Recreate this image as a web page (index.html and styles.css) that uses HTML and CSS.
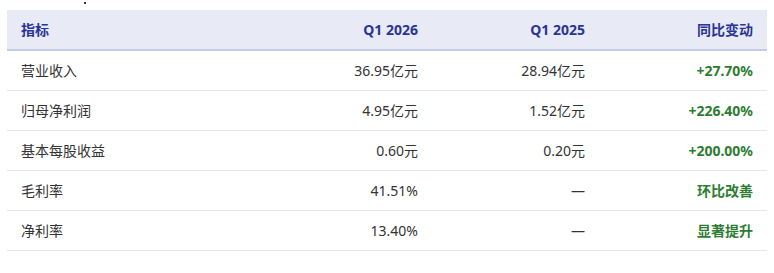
FILE: index.html
```html
<!DOCTYPE html>
<html lang="zh-CN">
<head>
<meta charset="utf-8">
<link rel="stylesheet" href="styles.css">
</head>
<body>
<div class="wrap">
<span class="dot"></span>
<table class="fin">
  <colgroup>
    <col class="c1"><col class="c2"><col class="c3"><col class="c4">
  </colgroup>
  <thead>
    <tr><th class="l">指标</th><th>Q1 2026</th><th>Q1 2025</th><th>同比变动</th></tr>
  </thead>
  <tbody>
    <tr><td class="l">营业收入</td><td>36.95亿元</td><td>28.94亿元</td><td class="up">+27.70%</td></tr>
    <tr><td class="l">归母净利润</td><td>4.95亿元</td><td>1.52亿元</td><td class="up">+226.40%</td></tr>
    <tr><td class="l">基本每股收益</td><td>0.60元</td><td>0.20元</td><td class="up">+200.00%</td></tr>
    <tr><td class="l">毛利率</td><td>41.51%</td><td>—</td><td class="up">环比改善</td></tr>
    <tr><td class="l">净利率</td><td>13.40%</td><td>—</td><td class="up">显著提升</td></tr>
  </tbody>
</table>
</div>
</body>
</html>
```

FILE: styles.css
```css
html, body {
  margin: 0;
  padding: 0;
  background: #ffffff;
}
body {
  font-family: "Noto Sans", "Noto Sans CJK SC", sans-serif;
  font-size: 14px;
  color: #333333;
}
.wrap {
  position: relative;
  padding: 10px 7px 0 7px;
}
.dot {
  position: absolute;
  left: 84px;
  top: 2px;
  width: 2px;
  height: 2px;
  background: #333;
}
.fin {
  width: 760px;
  border-collapse: collapse;
  table-layout: fixed;
}
.c1 { width: 258px; }
.c2, .c3 { width: 167px; }
.c4 { width: 168px; }
.fin th, .fin td {
  padding: 10px 14px;
  line-height: 19px;
  text-align: right;
  white-space: nowrap;
}
.fin th {
  background: #e8eaf6;
  color: #283593;
  font-weight: 700;
  border-bottom: 2px solid #c5cae9;
}
.fin td {
  border-bottom: 1px solid #e6e6e6;
}
.fin .l {
  text-align: left;
}
.fin .up {
  color: #2e7d32;
  font-weight: 700;
}
```
